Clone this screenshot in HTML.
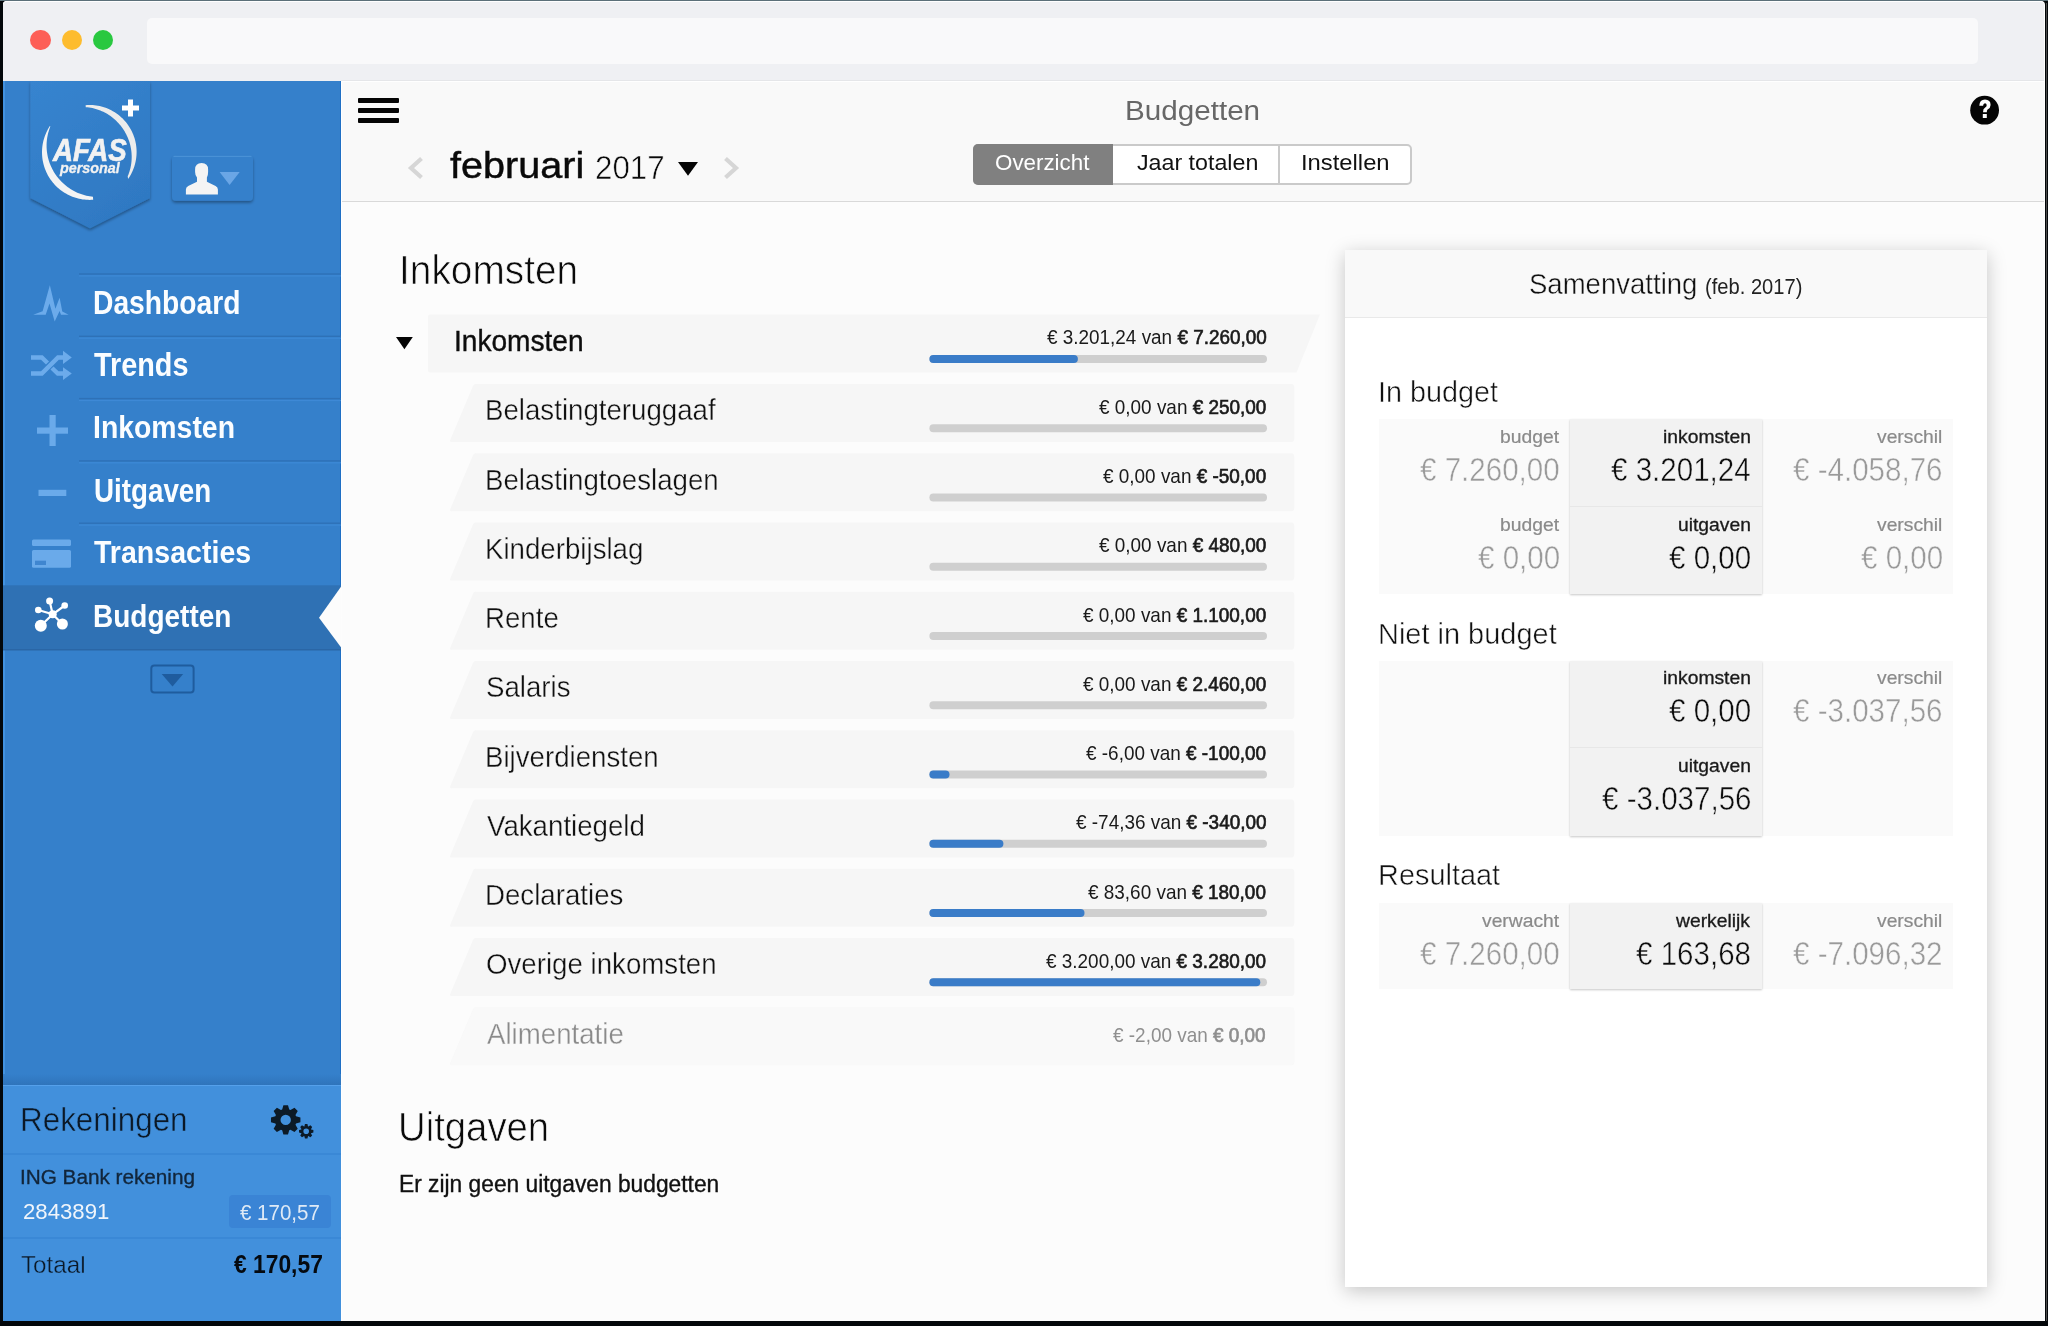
<!DOCTYPE html>
<html><head><meta charset="utf-8">
<style>
html,body{margin:0;padding:0;width:2048px;height:1326px;overflow:hidden;background:#1d252b;}
*{box-sizing:border-box;}
.a{position:absolute;}
.t{position:absolute;white-space:pre;line-height:1;transform-origin:0 0;font-family:"Liberation Sans",sans-serif;font-weight:400;}
.t b{font-weight:700;}
.t .m{-webkit-text-stroke:0.65px currentColor;}
</style></head><body>
<!-- window -->
<div class="a" style="left:0;top:0;width:2048px;height:1326px;background:#03070a;"></div>
<div class="a" style="left:0;top:0;width:2048px;height:1px;background:#5b7079;"></div>
<div class="a" style="left:3px;top:1px;width:2042px;height:1320px;background:#ffffff;border-radius:4px 4px 0 0;"></div>
<div class="a" style="left:3px;top:1px;width:2041px;height:1320px;background:#fcfcfc;border-radius:4px 4px 0 0;"></div>
<div class="a" style="left:2046px;top:3px;width:1px;height:1318px;background:#4a4a4a;"></div>
<!-- titlebar -->
<div class="a" style="left:3px;top:1px;width:2041px;height:80px;background:#eff0f3;border-top:1.5px solid #ffffff;border-radius:4px 4px 0 0;"></div>
<div class="a" style="left:147px;top:18px;width:1831px;height:46px;background:#f9f9fa;border-radius:5px;"></div>
<div class="a" style="left:30.3px;top:29.8px;width:20.4px;height:20.4px;border-radius:50%;background:#fd5f57;"></div>
<div class="a" style="left:61.8px;top:29.8px;width:20.4px;height:20.4px;border-radius:50%;background:#fdbc2e;"></div>
<div class="a" style="left:92.8px;top:29.8px;width:20.4px;height:20.4px;border-radius:50%;background:#29c840;"></div>
<!-- main header -->
<div class="a" style="left:341px;top:81px;width:1703px;height:121px;background:#f9f9f9;border-bottom:1px solid #d9d9d9;"></div>
<div class="a" style="left:341px;top:80px;width:1703px;height:1px;background:#e5e6e9;"></div>
<div class="a" style="left:341px;top:81px;width:1703px;height:1px;background:#ffffff;"></div>
<div class="a" style="left:341px;top:81px;width:1px;height:1240px;background:#ffffff;"></div>
<!-- sidebar -->
<div class="a" style="left:3px;top:81px;width:338px;height:1240px;background:#3580cb;"></div>
<div class="a" style="left:340px;top:81px;width:1px;height:1240px;background:#1f6fc4;"></div>
<div class="a" style="left:3px;top:81px;width:1.5px;height:1240px;background:#4292e0;"></div>
<svg class="a" style="left:0;top:0" width="2048" height="1326" viewBox="0 0 2048 1326">
 <defs>
  <filter id="sh" x="-20%" y="-20%" width="140%" height="140%"><feGaussianBlur in="SourceAlpha" stdDeviation="1.5"/><feOffset dy="1.5"/><feComponentTransfer><feFuncA type="linear" slope="0.35"/></feComponentTransfer><feMerge><feMergeNode/><feMergeNode in="SourceGraphic"/></feMerge></filter>
 </defs>
 <!-- shield -->
 <linearGradient id="shg" x1="0" y1="0" x2="0.6" y2="1"><stop offset="0" stop-color="#3784cf"/><stop offset="1" stop-color="#2f79c3"/></linearGradient>
 <path d="M30.4,81 H150 V198 L90,228.3 L30.4,198Z" fill="url(#shg)" filter="url(#sh)"/>
 <!-- logo arcs -->
 <path d="M85.59,105.17 L87.35,105.05 L89.12,105.00 L90.89,105.02 L92.66,105.10 L94.42,105.25 L96.18,105.46 L97.93,105.74 L99.67,106.09 L101.39,106.50 L103.09,106.98 L104.78,107.52 L106.44,108.12 L108.08,108.79 L109.70,109.51 L111.28,110.30 L112.84,111.15 L114.36,112.05 L115.85,113.01 L117.30,114.03 L118.71,115.10 L120.08,116.22 L121.40,117.39 L122.68,118.62 L123.92,119.89 L125.10,121.20 L126.24,122.56 L127.32,123.96 L128.35,125.40 L129.32,126.88 L130.24,128.39 L131.10,129.94 L131.90,131.52 L132.64,133.13 L133.32,134.76 L133.94,136.42 L134.50,138.10 L134.99,139.80 L135.42,141.52 L135.78,143.25 L136.08,145.00 L136.31,146.75 L136.47,148.52 L136.57,150.28 L136.60,152.05 L136.56,153.82 L136.46,155.59 L136.29,157.35 L136.06,159.11 L135.76,160.85 L135.39,162.59 L134.96,164.30 L134.47,166.00 L133.91,167.68 L133.28,169.34 L132.60,170.97 L131.86,172.58 L131.05,174.16 L130.19,175.70 L129.27,177.21 L128.29,178.69 L128.04,178.52 L127.70,176.22 L128.36,174.63 L128.96,173.04 L129.49,171.43 L129.97,169.81 L130.39,168.19 L130.74,166.56 L131.04,164.93 L131.28,163.31 L131.47,161.68 L131.60,160.06 L131.67,158.44 L131.69,156.83 L131.66,155.22 L131.57,153.63 L131.44,152.05 L131.25,150.48 L131.02,148.92 L130.74,147.38 L130.41,145.85 L130.03,144.34 L129.61,142.85 L129.15,141.37 L128.64,139.92 L128.09,138.48 L127.49,137.06 L126.86,135.66 L126.18,134.29 L125.47,132.94 L124.71,131.61 L123.91,130.30 L123.08,129.02 L122.21,127.76 L121.30,126.53 L120.35,125.32 L119.36,124.15 L118.34,123.00 L117.28,121.88 L116.19,120.79 L115.05,119.73 L113.89,118.70 L112.68,117.71 L111.45,116.75 L110.17,115.83 L108.87,114.95 L107.53,114.10 L106.16,113.29 L104.75,112.53 L103.32,111.81 L101.85,111.13 L100.35,110.50 L98.83,109.91 L97.28,109.38 L95.70,108.89 L94.09,108.46 L92.47,108.08 L90.82,107.76 L89.15,107.49 L87.46,107.29 L85.75,107.14Z" fill="#ececec"/>
 <path d="M49.86,126.10 L48.92,127.59 L48.03,129.12 L47.19,130.68 L46.42,132.27 L45.71,133.89 L45.05,135.53 L44.46,137.19 L43.93,138.88 L43.46,140.59 L43.06,142.31 L42.72,144.04 L42.45,145.79 L42.24,147.55 L42.09,149.31 L42.02,151.07 L42.00,152.84 L42.06,154.61 L42.17,156.37 L42.36,158.13 L42.61,159.88 L42.92,161.62 L43.30,163.35 L43.74,165.06 L44.25,166.76 L44.82,168.43 L45.45,170.08 L46.14,171.71 L46.89,173.31 L47.70,174.88 L48.57,176.42 L49.49,177.93 L50.47,179.40 L51.50,180.84 L52.59,182.23 L53.73,183.59 L54.91,184.90 L56.15,186.16 L57.43,187.38 L58.75,188.55 L60.12,189.67 L61.53,190.74 L62.98,191.76 L64.46,192.72 L65.98,193.62 L67.53,194.47 L69.11,195.26 L70.72,196.00 L72.36,196.67 L74.02,197.28 L75.70,197.82 L77.40,198.31 L79.11,198.73 L80.85,199.09 L82.59,199.38 L84.34,199.61 L86.10,199.77 L87.87,199.87 L89.64,199.90 L91.40,199.87 L93.17,199.77 L92.94,196.73 L91.28,196.54 L89.63,196.30 L88.01,196.01 L86.40,195.67 L84.82,195.28 L83.26,194.84 L81.73,194.36 L80.22,193.83 L78.74,193.25 L77.28,192.63 L75.85,191.97 L74.45,191.28 L73.08,190.54 L71.74,189.76 L70.42,188.95 L69.14,188.10 L67.89,187.21 L66.66,186.29 L65.47,185.34 L64.31,184.36 L63.18,183.34 L62.09,182.30 L61.02,181.23 L59.99,180.12 L59.00,178.99 L58.03,177.83 L57.10,176.64 L56.21,175.43 L55.34,174.19 L54.52,172.92 L53.73,171.63 L52.98,170.32 L52.26,168.98 L51.58,167.61 L50.94,166.22 L50.34,164.81 L49.78,163.38 L49.27,161.93 L48.79,160.45 L48.36,158.96 L47.97,157.44 L47.63,155.91 L47.33,154.35 L47.08,152.78 L46.88,151.20 L46.73,149.60 L46.62,147.99 L46.58,146.36 L46.58,144.72 L46.64,143.08 L46.75,141.42 L46.92,139.76 L47.14,138.09 L47.43,136.42 L47.77,134.75 L48.17,133.08 L48.63,131.41 L49.14,129.74 L49.72,128.08 L50.35,126.42Z" fill="#f4f4f4"/>
 <path d="M128,99.5 h5 v6 h6 v5 h-6 v6 h-5 v-6 h-6 v-5 h6Z" fill="#ffffff"/>
 <!-- user button -->
 <rect x="172" y="155.4" width="81" height="45.4" rx="4" fill="#3580cb" filter="url(#sh)"/>
 <rect x="173.5" y="155.8" width="78" height="1" fill="#5a9ee0" opacity="0.7"/>
 <path d="M185.9,194.4 V189.5 Q185.9,187.3 188.2,186 L197,181.8 V177.6 Q195.1,175.6 195.1,172 V169.6 Q195.1,163.1 201.6,163.1 Q208.1,163.1 208.1,169.6 V172 Q208.1,175.6 206.9,177.6 V181.8 L215.6,186 Q217.9,187.3 217.9,189.5 V194.4Z" fill="#f4f4f4"/>
 <path d="M219.6,172 H239.7 L229.6,185Z" fill="#6aa6e6"/>
 <!-- nav dividers -->
 <g fill="#2e71b7">
  <rect x="79" y="273.3" width="262" height="1.4"/>
  <rect x="79" y="335.6" width="262" height="1.4"/>
  <rect x="79" y="397.9" width="262" height="1.4"/>
  <rect x="79" y="460.2" width="262" height="1.4"/>
  <rect x="79" y="522.5" width="262" height="1.4"/>
 </g>
 <g fill="#3e89d6">
  <rect x="79" y="275.3" width="262" height="1.2"/>
  <rect x="79" y="337.6" width="262" height="1.2"/>
  <rect x="79" y="399.9" width="262" height="1.2"/>
  <rect x="79" y="462.2" width="262" height="1.2"/>
  <rect x="79" y="524.5" width="262" height="1.2"/>
 </g>
 <!-- active row -->
 <rect x="3" y="585.3" width="338" height="64.2" fill="#2f71b4"/>
 <rect x="3" y="649" width="338" height="1.5" fill="#2a66a6"/>
 <path d="M341.5,586 L319,617.8 L341.5,648Z" fill="#fcfcfc"/>
 <!-- icons -->
 <path d="M33.2,314.7 L42.6,311.2 L49.85,285.3 L55.4,308.8 L59.6,297.8 L62.3,311.6 L68.6,314.7 L61,314.7 L59.6,310.9 L54.7,321.5 L49.5,303.6 L45.7,314.7Z" fill="#6cabeb"/>
 <g fill="none" stroke="#6cabeb" stroke-width="4.4" stroke-linejoin="miter">
  <path d="M31,357.5 H41.8 L47.5,363"/>
  <path d="M31,373.5 H41.8 L58,357.5 H64"/>
  <path d="M52,368 L57.8,373.5 H64"/>
 </g>
 <path d="M63,350.7 L71.8,357.4 L63,364Z M63,367.2 L71.8,373.6 L63,380Z" fill="#6cabeb"/>
 <rect x="37" y="427.5" width="31" height="6.2" fill="#6aaaea"/>
 <rect x="49.5" y="415" width="6.2" height="31" fill="#6aaaea"/>
 <rect x="38.5" y="489.8" width="27.8" height="6.2" fill="#6aaaea"/>
 <rect x="32" y="539.6" width="39" height="6.5" rx="1.5" fill="#6aaaea"/>
 <rect x="32" y="550" width="39" height="17.7" rx="1.5" fill="#6aaaea"/>
 <rect x="35" y="560.7" width="11" height="4.3" fill="#3f86d0"/>
 <g stroke="#ffffff" stroke-width="2.2"><path d="M52.7,614.3 L49.6,601 M52.7,614.3 L64.7,605.5 M52.7,614.3 L38.3,610 M52.7,614.3 L40.8,625.7 M52.7,614.3 L62.4,624"/></g>
 <g fill="#ffffff"><circle cx="52.7" cy="614.3" r="4"/><circle cx="49.6" cy="601" r="3.5"/><circle cx="64.7" cy="605.5" r="3.3"/><circle cx="38.3" cy="610" r="3.3"/><circle cx="40.8" cy="625.7" r="6"/><circle cx="62.4" cy="624" r="5.5"/></g>
 <!-- dropdown -->
 <rect x="151.3" y="665.4" width="42.3" height="27" rx="3" fill="none" stroke="#1f5c9e" stroke-width="2"/>
 <path d="M161.7,674 H183.2 L172.5,686.4Z" fill="#1f5c9e"/>
</svg>
<!-- accounts -->
<div class="a" style="left:3px;top:1074px;width:338px;height:11px;background:linear-gradient(#3580cb,#2f74bb);"></div>
<div class="a" style="left:3px;top:1084.5px;width:338px;height:236.5px;background:#4290dc;border-top:1.5px solid #55a0ea;"></div>
<div class="a" style="left:3px;top:1153px;width:338px;height:1.5px;background:#3a88d6;"></div>
<div class="a" style="left:3px;top:1237px;width:338px;height:1.5px;background:#3a88d6;"></div>
<div class="a" style="left:229.2px;top:1195.4px;width:101.8px;height:33.1px;background:#3a84d5;border-radius:4px;"></div>
<svg class="a" style="left:0;top:0" width="2048" height="1326" viewBox="0 0 2048 1326">
 <g id="gear" fill="#0c1a27" fill-rule="evenodd"><path d="M296.01,1116.37 L300.42,1117.60 L300.42,1122.20 L296.01,1123.43 L295.49,1124.69 L297.74,1128.68 L294.48,1131.94 L290.49,1129.69 L289.23,1130.21 L288.00,1134.62 L283.40,1134.62 L282.17,1130.21 L280.91,1129.69 L276.92,1131.94 L273.66,1128.68 L275.91,1124.69 L275.39,1123.43 L270.98,1122.20 L270.98,1117.60 L275.39,1116.37 L275.91,1115.11 L273.66,1111.12 L276.92,1107.86 L280.91,1110.11 L282.17,1109.59 L283.40,1105.18 L288.00,1105.18 L289.23,1109.59 L290.49,1110.11 L294.48,1107.86 L297.74,1111.12 L295.49,1115.11Z M290.90,1119.90 A5.2,5.2 0 1 0 280.50,1119.90 A5.2,5.2 0 1 0 290.90,1119.90Z"/><path d="M311.07,1129.47 L313.39,1130.06 L313.39,1132.54 L311.07,1133.13 L310.94,1133.45 L312.16,1135.51 L310.41,1137.26 L308.35,1136.04 L308.03,1136.17 L307.44,1138.49 L304.96,1138.49 L304.37,1136.17 L304.05,1136.04 L301.99,1137.26 L300.24,1135.51 L301.46,1133.45 L301.33,1133.13 L299.01,1132.54 L299.01,1130.06 L301.33,1129.47 L301.46,1129.15 L300.24,1127.09 L301.99,1125.34 L304.05,1126.56 L304.37,1126.43 L304.96,1124.11 L307.44,1124.11 L308.03,1126.43 L308.35,1126.56 L310.41,1125.34 L312.16,1127.09 L310.94,1129.15Z M309.00,1131.30 A2.8,2.8 0 1 0 303.40,1131.30 A2.8,2.8 0 1 0 309.00,1131.30Z"/></g>
</svg>
<!-- main content -->
<svg class="a" style="left:0;top:0" width="2048" height="1326" viewBox="0 0 2048 1326">
 <!-- hamburger -->
 <rect x="358" y="98" width="41" height="5" rx="1" fill="#050505"/>
 <rect x="358" y="108" width="41" height="5" rx="1" fill="#050505"/>
 <rect x="358" y="118" width="41" height="5" rx="1" fill="#050505"/>
 <path d="M421.5,158.5 L411,168 L421.5,177.5" fill="none" stroke="#d6d6d6" stroke-width="4.2"/>
 <path d="M725.5,158.5 L736,168 L725.5,177.5" fill="none" stroke="#d6d6d6" stroke-width="4.2"/>
 <path d="M678,162 H698 L688,175.7Z" fill="#050505"/>
 <!-- help -->
 <circle cx="1984.6" cy="110.2" r="14.4" fill="#050505"/>
 <path d="M1979.3,105.8 Q1979.6,99.6 1985,99.6 Q1990.6,99.8 1990.6,105 Q1990.5,108.2 1987.6,109.6 Q1986.8,110.2 1986.8,112.3 H1983 Q1982.9,108.6 1985.2,107.4 Q1986.8,106.6 1986.7,105 Q1986.5,103.2 1985,103.2 Q1983.2,103.3 1983.1,105.8Z" fill="#fff"/>
 <rect x="1982.8" y="114" width="4" height="4" fill="#fff"/>
<path d="M430,314.5 H1320 L1296.5,372.6 H430 Q428,372.6 428,370.6 V316.5 Q428,314.5 430,314.5Z" fill="#f6f6f6"/>
<rect x="929.4" y="355" width="337.6" height="8" rx="4" fill="#cfcfcf"/>
<rect x="929.4" y="355" width="148.5" height="8" rx="4" fill="#3a7cc8"/>
<path d="M396,337 H412.8 L404.4,349.2Z" fill="#050505"/>
<path d="M475.5,384.00 H1291.2 Q1294.2,384.00 1294.2,387.00 V439.00 Q1294.2,442.00 1291.2,442.00 H451.5 Q449.5,442.00 450.2,440.00 L473.2,385.50 Q473.7,384.00 475.5,384.00Z" fill="#f6f6f6"/>
<rect x="929.4" y="424.20" width="337.6" height="8" rx="4" fill="#cfcfcf"/>
<path d="M475.5,453.25 H1291.2 Q1294.2,453.25 1294.2,456.25 V508.25 Q1294.2,511.25 1291.2,511.25 H451.5 Q449.5,511.25 450.2,509.25 L473.2,454.75 Q473.7,453.25 475.5,453.25Z" fill="#f6f6f6"/>
<rect x="929.4" y="493.45" width="337.6" height="8" rx="4" fill="#cfcfcf"/>
<path d="M475.5,522.50 H1291.2 Q1294.2,522.50 1294.2,525.50 V577.50 Q1294.2,580.50 1291.2,580.50 H451.5 Q449.5,580.50 450.2,578.50 L473.2,524.00 Q473.7,522.50 475.5,522.50Z" fill="#f6f6f6"/>
<rect x="929.4" y="562.70" width="337.6" height="8" rx="4" fill="#cfcfcf"/>
<path d="M475.5,591.75 H1291.2 Q1294.2,591.75 1294.2,594.75 V646.75 Q1294.2,649.75 1291.2,649.75 H451.5 Q449.5,649.75 450.2,647.75 L473.2,593.25 Q473.7,591.75 475.5,591.75Z" fill="#f6f6f6"/>
<rect x="929.4" y="631.95" width="337.6" height="8" rx="4" fill="#cfcfcf"/>
<path d="M475.5,661.00 H1291.2 Q1294.2,661.00 1294.2,664.00 V716.00 Q1294.2,719.00 1291.2,719.00 H451.5 Q449.5,719.00 450.2,717.00 L473.2,662.50 Q473.7,661.00 475.5,661.00Z" fill="#f6f6f6"/>
<rect x="929.4" y="701.20" width="337.6" height="8" rx="4" fill="#cfcfcf"/>
<path d="M475.5,730.25 H1291.2 Q1294.2,730.25 1294.2,733.25 V785.25 Q1294.2,788.25 1291.2,788.25 H451.5 Q449.5,788.25 450.2,786.25 L473.2,731.75 Q473.7,730.25 475.5,730.25Z" fill="#f6f6f6"/>
<rect x="929.4" y="770.45" width="337.6" height="8" rx="4" fill="#cfcfcf"/>
<rect x="929.4" y="770.45" width="20.1" height="8" rx="4" fill="#3a7cc8"/>
<path d="M475.5,799.50 H1291.2 Q1294.2,799.50 1294.2,802.50 V854.50 Q1294.2,857.50 1291.2,857.50 H451.5 Q449.5,857.50 450.2,855.50 L473.2,801.00 Q473.7,799.50 475.5,799.50Z" fill="#f6f6f6"/>
<rect x="929.4" y="839.70" width="337.6" height="8" rx="4" fill="#cfcfcf"/>
<rect x="929.4" y="839.70" width="74.0" height="8" rx="4" fill="#3a7cc8"/>
<path d="M475.5,868.75 H1291.2 Q1294.2,868.75 1294.2,871.75 V923.75 Q1294.2,926.75 1291.2,926.75 H451.5 Q449.5,926.75 450.2,924.75 L473.2,870.25 Q473.7,868.75 475.5,868.75Z" fill="#f6f6f6"/>
<rect x="929.4" y="908.95" width="337.6" height="8" rx="4" fill="#cfcfcf"/>
<rect x="929.4" y="908.95" width="155.1" height="8" rx="4" fill="#3a7cc8"/>
<path d="M475.5,938.00 H1291.2 Q1294.2,938.00 1294.2,941.00 V993.00 Q1294.2,996.00 1291.2,996.00 H451.5 Q449.5,996.00 450.2,994.00 L473.2,939.50 Q473.7,938.00 475.5,938.00Z" fill="#f6f6f6"/>
<rect x="929.4" y="978.20" width="337.6" height="8" rx="4" fill="#cfcfcf"/>
<rect x="929.4" y="978.20" width="330.9" height="8" rx="4" fill="#3a7cc8"/>
<path d="M475.5,1007.25 H1291.2 Q1294.2,1007.25 1294.2,1010.25 V1062.25 Q1294.2,1065.25 1291.2,1065.25 H451.5 Q449.5,1065.25 450.2,1063.25 L473.2,1008.75 Q473.7,1007.25 475.5,1007.25Z" fill="#f6f6f6" opacity="0.5"/>
</svg>
<!-- segmented control -->
<div class="a" style="left:973.4px;top:143.5px;width:438.6px;height:41.5px;border:2px solid #cacaca;border-radius:5px;background:#ffffff;"></div>
<div class="a" style="left:973.4px;top:143.5px;width:140px;height:41.5px;background:#808080;border-radius:5px 0 0 5px;"></div>
<div class="a" style="left:1278.4px;top:145px;width:2px;height:38.5px;background:#cacaca;"></div>
<!-- card -->
<div class="a" style="left:1345px;top:249.8px;width:642px;height:1037.2px;background:#ffffff;box-shadow:0 4px 18px rgba(0,0,0,0.22);"></div>
<div class="a" style="left:1345px;top:249.8px;width:642px;height:68.2px;background:#f9f9f9;border-bottom:1px solid #e9e9e9;"></div>
<div class="a" style="left:1379px;top:419.2px;width:574.2px;height:174.8px;background:#fafafa;"></div>
<div class="a" style="left:1379px;top:660.5px;width:574.2px;height:175px;background:#fafafa;"></div>
<div class="a" style="left:1379px;top:902.6px;width:574.2px;height:86.7px;background:#fafafa;"></div>
<div class="a" style="left:1570.4px;top:419.2px;width:191.4px;height:175.2px;background:#f2f2f2;box-shadow:0 1px 2px rgba(0,0,0,0.22);"></div>
<div class="a" style="left:1570.4px;top:506px;width:191.4px;height:1px;background:#e7e7e7;"></div>
<div class="a" style="left:1570.4px;top:660.5px;width:191.4px;height:175px;background:#f2f2f2;box-shadow:0 1px 2px rgba(0,0,0,0.22);"></div>
<div class="a" style="left:1570.4px;top:747.2px;width:191.4px;height:1px;background:#e7e7e7;"></div>
<div class="a" style="left:1570.4px;top:902.6px;width:191.4px;height:86.7px;background:#f2f2f2;box-shadow:0 1px 2px rgba(0,0,0,0.22);"></div>
<!-- logo text -->
<span class="t" style="left:92.65px;top:286.94px;font-size:32.32px;color:#fbfdff;transform:scaleX(0.8741)"><b>Dashboard</b></span>
<span class="t" style="left:93.60px;top:348.87px;font-size:32.75px;color:#fbfdff;transform:scaleX(0.8797)"><b>Trends</b></span>
<span class="t" style="left:93.22px;top:412.21px;font-size:31.88px;color:#fbfdff;transform:scaleX(0.8908)"><b>Inkomsten</b></span>
<span class="t" style="left:94.14px;top:474.94px;font-size:32.32px;color:#fbfdff;transform:scaleX(0.8589)"><b>Uitgaven</b></span>
<span class="t" style="left:94.00px;top:537.21px;font-size:31.88px;color:#fbfdff;transform:scaleX(0.8959)"><b>Transacties</b></span>
<span class="t" style="left:93.20px;top:600.62px;font-size:31.16px;color:#fbfdff;transform:scaleX(0.8984)"><b>Budgetten</b></span>
<span class="t" style="left:20.08px;top:1103.87px;font-size:32.75px;color:#0b1826;transform:scaleX(0.9587);-webkit-text-stroke:0.5px #4290dc">Rekeningen</span>
<span class="t" style="left:19.98px;top:1166.82px;font-size:20.29px;color:#12263b;transform:scaleX(1.0210);-webkit-text-stroke:0.35px #12263b">ING Bank rekening</span>
<span class="t" style="left:22.73px;top:1200.42px;font-size:22.90px;color:#f0f5fb;transform:scaleX(0.9687)">2843891</span>
<span class="t" style="left:239.70px;top:1201.24px;font-size:22.75px;color:#dfeaf6;transform:scaleX(0.9021)">€ 170,57</span>
<span class="t" style="left:21.00px;top:1252.62px;font-size:24.78px;color:#0b1826;transform:scaleX(0.9786);-webkit-text-stroke:0.4px #4290dc">Totaal</span>
<span class="t" style="left:234.30px;top:1252.01px;font-size:25.51px;color:#050a10;transform:scaleX(0.8952)"><b>€ 170,57</b></span>
<span class="t" style="left:1124.70px;top:95.58px;font-size:28.26px;color:#676767;transform:scaleX(1.0488)">Budgetten</span>
<span class="t" style="left:450.00px;top:148.39px;font-size:36.16px;color:#0a0a0a;transform:scaleX(1.0949);-webkit-text-stroke:0.45px #0a0a0a">februari</span>
<span class="t" style="left:594.55px;top:151.03px;font-size:33.04px;color:#0a0a0a;transform:scaleX(0.9492);-webkit-text-stroke:0.6px #f9f9f9">2017</span>
<span class="t" style="left:995.02px;top:150.92px;font-size:22.90px;color:#ffffff;transform:scaleX(0.9766)">Overzicht</span>
<span class="t" style="left:1136.50px;top:150.92px;font-size:22.90px;color:#111;transform:scaleX(1.0142)">Jaar totalen</span>
<span class="t" style="left:1300.92px;top:150.92px;font-size:22.90px;color:#111;transform:scaleX(1.0391)">Instellen</span>
<span class="t" style="left:399.18px;top:251.36px;font-size:39.86px;color:#0a0a0a;transform:scaleX(0.9740);-webkit-text-stroke:0.7px #fcfcfc">Inkomsten</span>
<span class="t" style="left:397.94px;top:1108.32px;font-size:40.14px;color:#0a0a0a;transform:scaleX(0.9546);-webkit-text-stroke:0.7px #fcfcfc">Uitgaven</span>
<span class="t" style="left:399.31px;top:1173.09px;font-size:23.04px;color:#111;transform:scaleX(0.9884);-webkit-text-stroke:0.35px #111">Er zijn geen uitgaven budgetten</span>
<span class="t" style="left:454.26px;top:327.06px;font-size:28.99px;color:#0d0d0d;transform:scaleX(0.9691);-webkit-text-stroke:0.4px #0d0d0d">Inkomsten</span>
<span class="t" style="left:1046.70px;top:327.28px;font-size:20.58px;color:#1a1a1a;transform:scaleX(0.9190)">€ 3.201,24 van <span class=m>€ 7.260,00</span></span>
<span class="t" style="left:484.68px;top:396.29px;font-size:28.84px;color:#101010;transform:scaleX(0.9595);-webkit-text-stroke:0.35px #f6f6f6">Belastingteruggaaf</span>
<span class="t" style="left:1098.70px;top:396.85px;font-size:20.14px;color:#1a1a1a;transform:scaleX(0.9408)">€ 0,00 van <span class=m>€ 250,00</span></span>
<span class="t" style="left:484.68px;top:465.54px;font-size:28.84px;color:#101010;transform:scaleX(0.9595);-webkit-text-stroke:0.35px #f6f6f6">Belastingtoeslagen</span>
<span class="t" style="left:1102.92px;top:466.10px;font-size:20.14px;color:#1a1a1a;transform:scaleX(0.9408)">€ 0,00 van <span class=m>€ -50,00</span></span>
<span class="t" style="left:484.68px;top:534.79px;font-size:28.84px;color:#101010;transform:scaleX(0.9595);-webkit-text-stroke:0.35px #f6f6f6">Kinderbijslag</span>
<span class="t" style="left:1098.70px;top:535.35px;font-size:20.14px;color:#1a1a1a;transform:scaleX(0.9408)">€ 0,00 van <span class=m>€ 480,00</span></span>
<span class="t" style="left:484.68px;top:604.04px;font-size:28.84px;color:#101010;transform:scaleX(0.9595);-webkit-text-stroke:0.35px #f6f6f6">Rente</span>
<span class="t" style="left:1082.91px;top:604.60px;font-size:20.14px;color:#1a1a1a;transform:scaleX(0.9408)">€ 0,00 van <span class=m>€ 1.100,00</span></span>
<span class="t" style="left:485.64px;top:673.29px;font-size:28.84px;color:#101010;transform:scaleX(0.9595);-webkit-text-stroke:0.35px #f6f6f6">Salaris</span>
<span class="t" style="left:1082.91px;top:673.85px;font-size:20.14px;color:#1a1a1a;transform:scaleX(0.9408)">€ 0,00 van <span class=m>€ 2.460,00</span></span>
<span class="t" style="left:484.68px;top:742.54px;font-size:28.84px;color:#101010;transform:scaleX(0.9595);-webkit-text-stroke:0.35px #f6f6f6">Bijverdiensten</span>
<span class="t" style="left:1086.09px;top:743.10px;font-size:20.14px;color:#1a1a1a;transform:scaleX(0.9408)">€ -6,00 van <span class=m>€ -100,00</span></span>
<span class="t" style="left:486.60px;top:811.79px;font-size:28.84px;color:#101010;transform:scaleX(0.9595);-webkit-text-stroke:0.35px #f6f6f6">Vakantiegeld</span>
<span class="t" style="left:1075.56px;top:812.35px;font-size:20.14px;color:#1a1a1a;transform:scaleX(0.9408)">€ -74,36 van <span class=m>€ -340,00</span></span>
<span class="t" style="left:484.68px;top:881.04px;font-size:28.84px;color:#101010;transform:scaleX(0.9595);-webkit-text-stroke:0.35px #f6f6f6">Declaraties</span>
<span class="t" style="left:1088.17px;top:881.60px;font-size:20.14px;color:#1a1a1a;transform:scaleX(0.9408)">€ 83,60 van <span class=m>€ 180,00</span></span>
<span class="t" style="left:485.64px;top:950.29px;font-size:28.84px;color:#101010;transform:scaleX(0.9595);-webkit-text-stroke:0.35px #f6f6f6">Overige inkomsten</span>
<span class="t" style="left:1046.06px;top:950.85px;font-size:20.14px;color:#1a1a1a;transform:scaleX(0.9408)">€ 3.200,00 van <span class=m>€ 3.280,00</span></span>
<span class="t" style="left:486.60px;top:1019.54px;font-size:28.84px;color:#8a8a8a;transform:scaleX(0.9595);-webkit-text-stroke:0.35px #f6f6f6">Alimentatie</span>
<span class="t" style="left:1113.45px;top:1025.10px;font-size:20.14px;color:#8f8f8f;transform:scaleX(0.9408)">€ -2,00 van <span class=m>€ 0,00</span></span>
<span class="t" style="left:1529.04px;top:269.71px;font-size:28.70px;color:#111;transform:scaleX(0.9599);-webkit-text-stroke:0.4px #f9f9f9">Samenvatting</span>
<span class="t" style="left:1705.11px;top:274.74px;font-size:22.75px;color:#222;transform:scaleX(0.8852)">(feb. 2017)</span>
<span class="t" style="left:1378.03px;top:377.22px;font-size:29.28px;color:#111;transform:scaleX(0.9840);-webkit-text-stroke:0.5px #ffffff">In budget</span>
<span class="t" style="left:1378.07px;top:618.80px;font-size:30.00px;color:#111;transform:scaleX(0.9652);-webkit-text-stroke:0.5px #ffffff">Niet in budget</span>
<span class="t" style="left:1378.06px;top:860.33px;font-size:29.86px;color:#111;transform:scaleX(0.9681);-webkit-text-stroke:0.5px #ffffff">Resultaat</span>
<span class="t" style="left:1499.91px;top:429.14px;font-size:17.67px;color:#8a8a8a;transform:scaleX(1.0923);-webkit-text-stroke:0.2px #8a8a8a">budget</span>
<span class="t" style="left:1420.40px;top:454.10px;font-size:32.61px;color:#9a9a9a;transform:scaleX(0.9063);-webkit-text-stroke:0.5px #fafafa">€ 7.260,00</span>
<span class="t" style="left:1663.40px;top:429.14px;font-size:17.67px;color:#1a1a1a;transform:scaleX(1.0923);-webkit-text-stroke:0.3px #1a1a1a">inkomsten</span>
<span class="t" style="left:1610.89px;top:454.10px;font-size:32.61px;color:#0d0d0d;transform:scaleX(0.9063);-webkit-text-stroke:0.5px #f2f2f2">€ 3.201,24</span>
<span class="t" style="left:1877.43px;top:429.14px;font-size:17.67px;color:#8a8a8a;transform:scaleX(1.0923);-webkit-text-stroke:0.2px #8a8a8a">verschil</span>
<span class="t" style="left:1793.36px;top:454.10px;font-size:32.61px;color:#9a9a9a;transform:scaleX(0.9063);-webkit-text-stroke:0.5px #fafafa">€ -4.058,76</span>
<span class="t" style="left:1499.91px;top:517.14px;font-size:17.67px;color:#8a8a8a;transform:scaleX(1.0923);-webkit-text-stroke:0.2px #8a8a8a">budget</span>
<span class="t" style="left:1477.89px;top:542.10px;font-size:32.61px;color:#9a9a9a;transform:scaleX(0.9063);-webkit-text-stroke:0.5px #fafafa">€ 0,00</span>
<span class="t" style="left:1678.38px;top:517.14px;font-size:17.67px;color:#1a1a1a;transform:scaleX(1.0923);-webkit-text-stroke:0.3px #1a1a1a">uitgaven</span>
<span class="t" style="left:1669.29px;top:542.10px;font-size:32.61px;color:#0d0d0d;transform:scaleX(0.9063);-webkit-text-stroke:0.5px #f2f2f2">€ 0,00</span>
<span class="t" style="left:1877.43px;top:517.14px;font-size:17.67px;color:#8a8a8a;transform:scaleX(1.0923);-webkit-text-stroke:0.2px #8a8a8a">verschil</span>
<span class="t" style="left:1860.69px;top:542.10px;font-size:32.61px;color:#9a9a9a;transform:scaleX(0.9063);-webkit-text-stroke:0.5px #fafafa">€ 0,00</span>
<span class="t" style="left:1663.40px;top:670.44px;font-size:17.67px;color:#1a1a1a;transform:scaleX(1.0923);-webkit-text-stroke:0.3px #1a1a1a">inkomsten</span>
<span class="t" style="left:1669.29px;top:695.40px;font-size:32.61px;color:#0d0d0d;transform:scaleX(0.9063);-webkit-text-stroke:0.5px #f2f2f2">€ 0,00</span>
<span class="t" style="left:1877.43px;top:670.44px;font-size:17.67px;color:#8a8a8a;transform:scaleX(1.0923);-webkit-text-stroke:0.2px #8a8a8a">verschil</span>
<span class="t" style="left:1793.36px;top:695.40px;font-size:32.61px;color:#9a9a9a;transform:scaleX(0.9063);-webkit-text-stroke:0.5px #fafafa">€ -3.037,56</span>
<span class="t" style="left:1678.38px;top:758.44px;font-size:17.67px;color:#1a1a1a;transform:scaleX(1.0923);-webkit-text-stroke:0.3px #1a1a1a">uitgaven</span>
<span class="t" style="left:1601.96px;top:783.40px;font-size:32.61px;color:#0d0d0d;transform:scaleX(0.9063);-webkit-text-stroke:0.5px #f2f2f2">€ -3.037,56</span>
<span class="t" style="left:1481.72px;top:912.54px;font-size:17.67px;color:#8a8a8a;transform:scaleX(1.0923);-webkit-text-stroke:0.2px #8a8a8a">verwacht</span>
<span class="t" style="left:1420.40px;top:937.50px;font-size:32.61px;color:#9a9a9a;transform:scaleX(0.9063);-webkit-text-stroke:0.5px #fafafa">€ 7.260,00</span>
<span class="t" style="left:1676.27px;top:912.54px;font-size:17.67px;color:#1a1a1a;transform:scaleX(1.0923);-webkit-text-stroke:0.3px #1a1a1a">werkelijk</span>
<span class="t" style="left:1636.44px;top:937.50px;font-size:32.61px;color:#0d0d0d;transform:scaleX(0.9063);-webkit-text-stroke:0.5px #f2f2f2">€ 163,68</span>
<span class="t" style="left:1877.43px;top:912.54px;font-size:17.67px;color:#8a8a8a;transform:scaleX(1.0923);-webkit-text-stroke:0.2px #8a8a8a">verschil</span>
<span class="t" style="left:1793.36px;top:937.50px;font-size:32.61px;color:#9a9a9a;transform:scaleX(0.9063);-webkit-text-stroke:0.5px #fafafa">€ -7.096,32</span>
<span class="t" style="left:52.89px;top:134.95px;font-size:31.01px;color:#f2f2f2;transform:scaleX(0.8929);-webkit-text-stroke:0.7px #f2f2f2"><b><i>AFAS</i></b></span>
<span class="t" style="left:59.94px;top:160.41px;font-size:15.34px;color:#f2f2f2;transform:scaleX(0.9356);-webkit-text-stroke:0.3px #f2f2f2"><b><i>personal</i></b></span>
</body></html>
